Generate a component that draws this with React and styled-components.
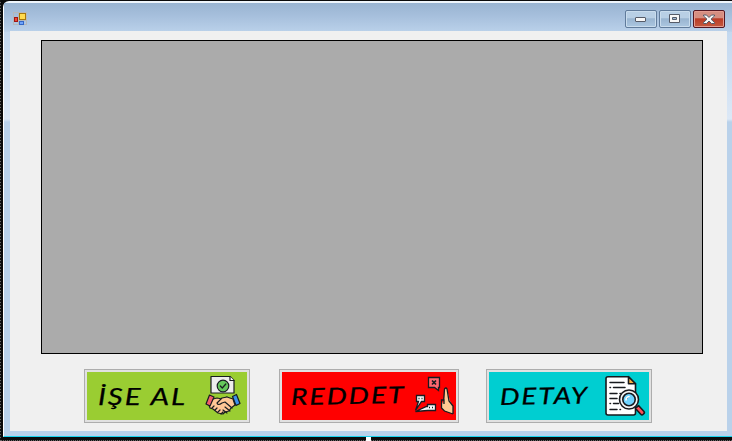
import React from 'react';
import styled, { createGlobalStyle } from 'styled-components';

const Global = createGlobalStyle`
  *{box-sizing:border-box}
  body{margin:0;background:#111;overflow:hidden}
`;
const Designer = styled.div`
  position:relative;width:732px;height:441px;padding:1px 0 0 3px;overflow:hidden;
  background:
    repeating-linear-gradient(0deg,#666 0 1px,#111 1px 3px) 0 0/1px 100% no-repeat,
    repeating-linear-gradient(90deg,#111 0 1px,#666 1px 2px) 0 440px/100% 1px no-repeat,
    #0a0a0a;
`;
const Window = styled.section`
  width:729px;height:436px;border-left:1px solid #fff;border-top:2px solid #eef5fb;
  border-bottom:1px solid #19d2ed;border-top-left-radius:6px;
  padding:0 5px 5px 6px;display:flex;flex-direction:column;
  background:linear-gradient(#99b4d1 0,#b6cde6 28px,#c3d8ef 29px,#dce8f6 116px,#b9d1ea 119px,#b9d1ea);
`;
const TitleBar = styled.header`
  height:28px;flex:none;display:flex;justify-content:space-between;
  margin:0 -5px 0 -6px;padding:7px 7px 0 9px;
  background:linear-gradient(#99b4d1,#a6bfdc 45%,#b9d0e9);
`;
const AppIcon = styled.svg`display:block;margin-top:2px;`;
const Controls = styled.div`display:flex;gap:2px;`;
const Control = styled.button`
  width:32px;height:18px;padding:0;border-radius:2px;display:grid;place-items:center;
  border:1px solid ${p => p.$close ? '#531722' : '#607b9b'};
  box-shadow:inset 0 0 0 1px ${p => p.$close ? '#e49b90' : '#c9dced'};
  background:${p => p.$close
    ? 'linear-gradient(#d58e81 0 44%,#ba3b26 48%,#c45a40)'
    : 'linear-gradient(#b8cfe5 0 44%,#98b4d0 48%,#acc7e1)'};
  svg{display:block}
`;
const Client = styled.main`flex:1;background:#f0f0f0;padding:9px 24px 0 31px;`;
const Grid = styled.div`height:314px;width:662px;background:#ababab;border:1px solid #000;`;
const Actions = styled.div`display:flex;margin:15px 0 0 43px;`;
const Action = styled.button`
  width:${p => p.$w}px;height:54px;margin-right:${p => p.$gap || 0}px;flex:none;
  border:1px solid #adadad;padding:2px;background:#e1e1e1;display:block;
`;
const Face = styled.span`
  display:flex;height:48px;justify-content:space-between;background:${p => p.$color};
  padding:3px ${p => p.$right}px 0 ${p => p.$left}px;
`;
const Label = styled.span`
  display:block;width:0;white-space:pre;color:#000;text-align:left;
  font:italic 400 23px/40px Lato,"Open Sans",sans-serif;
  -webkit-text-stroke:.25px #000;letter-spacing:1.5px;
  transform-origin:0 50%;
  transform:translateY(1px) rotate(${p => p.$tilt}deg) scaleX(${p => p.$stretch});
`;
const Picture = styled.svg`display:block;flex:none;overflow:visible;`;

const Handshake = () => (
  <Picture width="36" height="40" viewBox="0 0 36 40" stroke="#181c20" strokeWidth="1.2" strokeLinejoin="round" strokeLinecap="round">
    <path d="M6 1.5h19l4 4V18H6z" fill="#eee" />
    <path d="M25 1.5v4h4" fill="#fff" />
    <circle cx="18" cy="11" r="5.8" fill="#64c85c" />
    <path d="m15.3 11 2 2 3.5-4" fill="none" />
    <path d="m8 24 4-1 5 1 5-2 6 2 2 6-4 3-2 3-4 1-2 2-5-1-5-4-3-1-1-3z" fill="#ffc796" />
    <path d="m4.5 20 4.5 2-4 9-4-2z" fill="#f25e6b" />
    <path d="m27.5 21.5 4-2 3.5 9-4 2z" fill="#3c91ed" />
    <path d="m22 22-5 1-5 5q1 3 5 0l3-1 7 6" fill="#ffc796" />
    <path d="m7 33 2-2m1 4 2-2m1 4 2-2m1 4 2-2m2-5 5 4m-7-1 4 3" fill="none" />
  </Picture>
);
const Reject = () => (
  <Picture width="39" height="40" viewBox="0 0 39 40" stroke="#171a20" strokeWidth="1.3">
    <path d="M13.5 2.5h11v10h-1v3l-4-3h-6z" fill="#ff6870" />
    <path d="m17 5.5 4 4m0-4-4 4" strokeWidth="1.7" />
    <path d="M1.5 20.5h8v6h-3l-6 9 3-9h-2z" fill="#f6f6f6" />
    <path d="M12.5 29.5h8v6h-8l-12 1 11-5h1z" fill="#f6f6f6" />
    <path d="M3.5 23.5h1m2 0h1m6.5 9h1m2 0h1" strokeWidth="1.6" />
    <path d="M26.5 25v8l3 3 8.5 3v-8l-3-5-3-12q-1-2-2.5 0L29 25l-1 4z" fill="#ffc892" stroke="none" />
    <path d="M29 29v-4h-2.5v8l3 3 8.5 3M28.7 25l.8-11q1.5-2 2.5 0l2 12 4 5v8" fill="none" />
  </Picture>
);
const Inspect = () => (
  <Picture width="41" height="41" viewBox="0 0 41 41" stroke="#17191d" strokeWidth="1.6" strokeLinejoin="round" strokeLinecap="round">
    <path d="M3 1.7h20.5l7 7v29.3q0 2-2 2H3q-2 0-2-2V3.5q0-1.8 2-1.8z" fill="#fff" />
    <path d="M23.5 1.7v7h7z" fill="#f8b143" />
    <path d="M5 7.5h14M5 12.5h.5m3 0H20M5 18.5h7m3 0h.5M5 23.5h7M5 28.5h.5m3 0h5M5 34.5h7m3 0h.5" strokeWidth="1.5" />
    <path d="m30.5 33.5 3-3 5.5 6q1 1-.5 2.5-1.5 1.5-2.5.5z" fill="#ff5058" />
    <circle cx="24" cy="24.5" r="9.5" fill="#f5f5f5" />
    <circle cx="24" cy="24.5" r="6.2" fill="#70d4ff" />
    <path d="M21 25q0-3 3-3.5" stroke="#fff" />
  </Picture>
);

const actions = [
  { text: 'İŞE AL', color: '#9acd32', w: 166, gap: 29, left: 11, right: 6, stretch: 1.28, tilt: 0, Icon: Handshake },
  { text: 'REDDET', color: '#ff0000', w: 180, gap: 27, left: 9, right: 2, stretch: 1.24, tilt: -1, Icon: Reject },
  { text: 'DETAY', color: '#00ced1', w: 166, gap: 0, left: 11, right: 3, stretch: 1.21, tilt: -1, Icon: Inspect },
];

const ResizeHandle = styled.span`
  position:absolute;left:366px;top:437px;width:5px;height:4px;background:#fff;
`;

export default function App() {
  return <><Global /><Designer>
    <Window>
      <TitleBar>
        <AppIcon width="14" height="14" viewBox="0 0 14 14" shapeRendering="crispEdges">
          <path d="M.5.5h13v12H.5zM5.5.5v12M.5 8.5h13" fill="none" stroke="#b5b8ba" />
          <path d="M6.5 1.5h6v6h-6z" fill="#ffda4d" stroke="#a87809" />
          <path d="M1.5 5.5h3v4h-3z" fill="#ed4a32" stroke="#9f1515" />
          <path d="M6.5 9.5h4v3h-4z" fill="#70a4fa" stroke="#3267c7" />
        </AppIcon>
        <Controls>
          <Control aria-label="Minimize"><svg width="12" height="6"><rect x=".5" y="1.5" width="10" height="4" rx=".5" fill="#f7f7f7" stroke="#555b68" /></svg></Control>
          <Control aria-label="Maximize"><svg width="12" height="10"><path d="M.5.5h10v8h-10zM3.5 3.5h4v2h-4z" fill="#f7f7f7" fillRule="evenodd" stroke="#555b68" /></svg></Control>
          <Control $close aria-label="Close"><svg width="14" height="11"><path d="M1.5 1h3L7 3.5 9.5 1h3v1L9 5.2l3.5 3.3v1h-3L7 7 4.5 9.5h-3v-1L5 5.2 1.5 2z" fill="#f7f7f7" stroke="#555b68" /></svg></Control>
        </Controls>
      </TitleBar>
      <Client>
        <Grid />
        <Actions>
          {actions.map(({ text, color, w, gap, left, right, stretch, tilt, Icon }) => (
            <Action key={text} $w={w} $gap={gap}>
              <Face $color={color} $left={left} $right={right}><Label $stretch={stretch} $tilt={tilt}>{text}</Label><Icon /></Face>
            </Action>
          ))}
        </Actions>
      </Client>
    </Window>
    <ResizeHandle />
  </Designer></>;
}
